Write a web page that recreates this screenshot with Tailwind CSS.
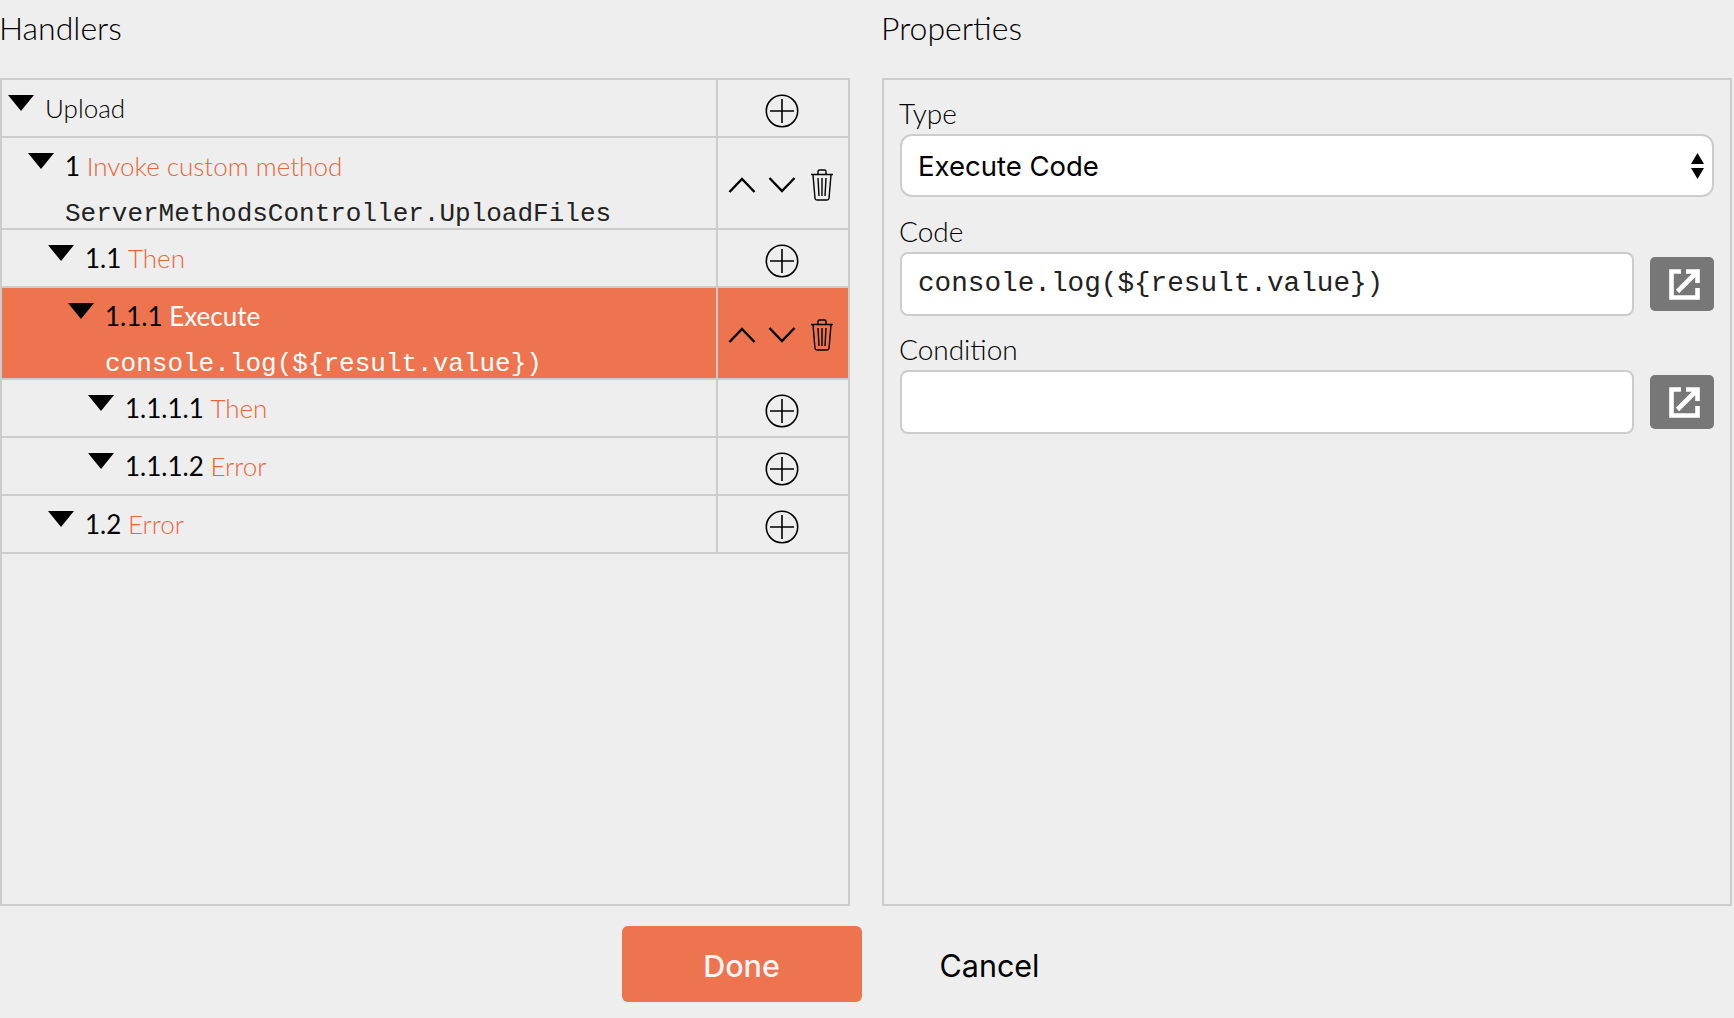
<!DOCTYPE html>
<html lang="en">
<head>
  <meta charset="UTF-8">
  <title>Handlers</title>
  <script src="https://cdn.jsdelivr.net/npm/@tailwindcss/browser@4"></script>
</head>
<body class="bg-[#eeeeee] h-[1018px] w-[1734px] overflow-hidden text-black font-['Lato',sans-serif]">
  <svg class="hidden">
    <symbol id="tri" viewBox="0 0 26 16"><path d="M0 0H26L13 16Z" fill="#000"/></symbol>
    <symbol id="plus" viewBox="0 0 34 34"><circle cx="17" cy="17" r="15.7" fill="none" stroke="#000" stroke-width="1.6"/><path d="M17 5V29M5 17H29" stroke="#000" stroke-width="1.6"/></symbol>
    <symbol id="up" viewBox="0 0 28 16"><path d="M1.5 15L14 2L26.5 15" fill="none" stroke="#000" stroke-width="2.4"/></symbol>
    <symbol id="down" viewBox="0 0 28 16"><path d="M1.5 1L14 14L26.5 1" fill="none" stroke="#000" stroke-width="2.4"/></symbol>
    <symbol id="trash" viewBox="0 0 24 32"><path d="M1 5.5H23M8 5V2.5Q8 1 9.500 1H14.500Q16 1 16 2.500V5M3 6L5 29.500Q5.200 31 7 31H17Q18.800 31 19 29.500L21 6M8 9L9 27M12 9V27M16 9L15 27" fill="none" stroke="#000" stroke-width="1.400"/></symbol>
    <symbol id="open" viewBox="0 0 31 31"><path d="M12 2.500H2.500V28.500H28.500V19M8.500 22.500L26 5M17 2.500H28.500V14" fill="none" stroke="#fff" stroke-width="4.600"/></symbol>
  </svg>

  <div class="flex gap-[32px] h-[78px]">
    <div class="w-[850px] -ml-[1px] pt-[10px] text-[32px] leading-[36px] font-light">Handlers</div>
    <div class="flex-1 pt-[10px] text-[32px] leading-[36px] font-light">Properties</div>
  </div>

  <div class="flex gap-[32px] h-[828px]">
    <!-- tree -->
    <div class="w-[850px] border-2 border-[#cccccc] text-[26px] leading-[30px]">
      <div class="flex h-[58px] border-b-2 border-[#cccccc]">
        <div class="flex-1 flex items-start pl-[6px] pt-[15px] border-r-2 border-[#cccccc]">
          <svg class="w-[26px] h-[16px] shrink-0"><use href="#tri"/></svg>
          <div class="ml-[11px] -mt-[2px] font-light">Upload</div>
        </div>
        <div class="w-[130px] flex items-center justify-center pt-[5px] pr-[2px]"><svg class="w-[34px] h-[34px]"><use href="#plus"/></svg></div>
      </div>

      <div class="flex h-[92px] border-b-2 border-[#cccccc]">
        <div class="flex-1 flex items-start pl-[26px] pt-[15px] border-r-2 border-[#cccccc]">
          <svg class="w-[26px] h-[16px] shrink-0"><use href="#tri"/></svg>
          <div class="ml-[11px] -mt-[2px]">
            <div>1 <span class="text-[#e9653c] font-light">Invoke custom method</span></div>
            <div class="font-['Liberation_Mono',monospace] mt-[18px] text-[#222222]">ServerMethodsController.UploadFiles</div>
          </div>
        </div>
        <div class="w-[130px] flex items-center justify-center pt-[3px] pr-[2px]">
          <div class="w-[40px] flex justify-center"><svg class="w-[28px] h-[16px]"><use href="#up"/></svg></div>
          <div class="w-[40px] flex justify-center"><svg class="w-[28px] h-[16px]"><use href="#down"/></svg></div>
          <div class="w-[40px] flex justify-center"><svg class="w-[24px] h-[32px]"><use href="#trash"/></svg></div>
        </div>
      </div>

      <div class="flex h-[58px] border-b-2 border-[#cccccc]">
        <div class="flex-1 flex items-start pl-[46px] pt-[15px] border-r-2 border-[#cccccc]">
          <svg class="w-[26px] h-[16px] shrink-0"><use href="#tri"/></svg>
          <div class="ml-[11px] -mt-[2px]">1.1 <span class="text-[#e9653c] font-light">Then</span></div>
        </div>
        <div class="w-[130px] flex items-center justify-center pt-[5px] pr-[2px]"><svg class="w-[34px] h-[34px]"><use href="#plus"/></svg></div>
      </div>

      <div class="flex h-[92px] border-b-2 border-[#cccccc] bg-[#ed744e]">
        <div class="flex-1 flex items-start pl-[66px] pt-[15px] border-r-2 border-[#cccccc]">
          <svg class="w-[26px] h-[16px] shrink-0"><use href="#tri"/></svg>
          <div class="ml-[11px] -mt-[2px]">
            <div>1.1.1 <span class="text-white">Execute</span></div>
            <div class="font-['Liberation_Mono',monospace] mt-[18px] text-white">console.log(${result.value})</div>
          </div>
        </div>
        <div class="w-[130px] flex items-center justify-center pt-[3px] pr-[2px]">
          <div class="w-[40px] flex justify-center"><svg class="w-[28px] h-[16px]"><use href="#up"/></svg></div>
          <div class="w-[40px] flex justify-center"><svg class="w-[28px] h-[16px]"><use href="#down"/></svg></div>
          <div class="w-[40px] flex justify-center"><svg class="w-[24px] h-[32px]"><use href="#trash"/></svg></div>
        </div>
      </div>

      <div class="flex h-[58px] border-b-2 border-[#cccccc]">
        <div class="flex-1 flex items-start pl-[86px] pt-[15px] border-r-2 border-[#cccccc]">
          <svg class="w-[26px] h-[16px] shrink-0"><use href="#tri"/></svg>
          <div class="ml-[11px] -mt-[2px]">1.1.1.1 <span class="text-[#e9653c] font-light">Then</span></div>
        </div>
        <div class="w-[130px] flex items-center justify-center pt-[5px] pr-[2px]"><svg class="w-[34px] h-[34px]"><use href="#plus"/></svg></div>
      </div>

      <div class="flex h-[58px] border-b-2 border-[#cccccc]">
        <div class="flex-1 flex items-start pl-[86px] pt-[15px] border-r-2 border-[#cccccc]">
          <svg class="w-[26px] h-[16px] shrink-0"><use href="#tri"/></svg>
          <div class="ml-[11px] -mt-[2px]">1.1.1.2 <span class="text-[#e9653c] font-light">Error</span></div>
        </div>
        <div class="w-[130px] flex items-center justify-center pt-[5px] pr-[2px]"><svg class="w-[34px] h-[34px]"><use href="#plus"/></svg></div>
      </div>

      <div class="flex h-[58px] border-b-2 border-[#cccccc]">
        <div class="flex-1 flex items-start pl-[46px] pt-[15px] border-r-2 border-[#cccccc]">
          <svg class="w-[26px] h-[16px] shrink-0"><use href="#tri"/></svg>
          <div class="ml-[11px] -mt-[2px]">1.2 <span class="text-[#e9653c] font-light">Error</span></div>
        </div>
        <div class="w-[130px] flex items-center justify-center pt-[5px] pr-[2px]"><svg class="w-[34px] h-[34px]"><use href="#plus"/></svg></div>
      </div>
    </div>

    <!-- properties -->
    <div class="flex-1 mr-[2px] border-2 border-[#cccccc] px-[16px] text-[28px] leading-[30px] font-light">
      <div class="h-[54px] pt-[18px] -ml-[1px]">Type</div>
      <div class="h-[63px] flex items-center justify-between bg-white border-2 border-[#cccccc] rounded-[12px] pl-[16px] pr-[8px]">
        <span class="font-['Inter',sans-serif] font-normal text-[27.500px] pt-[1px]">Execute Code</span>
        <svg class="w-[13px] h-[26px]" viewBox="0 0 13 26"><path d="M0 11L6.500 0L13 11ZM0 15H13L6.500 26Z" fill="#000"/></svg>
      </div>

      <div class="h-[55px] pt-[19px] -ml-[1px]">Code</div>
      <div class="flex items-center gap-[16px]">
        <input class="flex-1 min-w-0 h-[64px] bg-white border-2 border-[#cccccc] rounded-[8px] px-[16px] pb-[2px] font-['Liberation_Mono',monospace] font-normal text-[27.700px] text-[#222222] outline-none" value="console.log(${result.value})">
        <div class="w-[64px] h-[54px] rounded-[5px] bg-[#777777] flex items-center justify-center"><svg class="w-[31px] h-[31px] ml-[4px]"><use href="#open"/></svg></div>
      </div>

      <div class="h-[54px] pt-[18px] -ml-[1px]">Condition</div>
      <div class="flex items-center gap-[16px]">
        <input class="flex-1 min-w-0 h-[64px] bg-white border-2 border-[#cccccc] rounded-[8px] px-[16px] outline-none">
        <div class="w-[64px] h-[54px] rounded-[5px] bg-[#777777] flex items-center justify-center"><svg class="w-[31px] h-[31px] ml-[4px]"><use href="#open"/></svg></div>
      </div>
    </div>
  </div>

  <div class="flex justify-center gap-[8px] pr-[3px] mt-[20px] font-['Inter',sans-serif] text-[30.500px]">
    <button class="w-[240px] h-[76px] pt-[3px] rounded-[6px] bg-[#ed744e] text-[#f5f5f5] font-medium">Done</button>
    <button class="w-[240px] h-[76px] pt-[3px] text-black">Cancel</button>
  </div>
</body>
</html>
